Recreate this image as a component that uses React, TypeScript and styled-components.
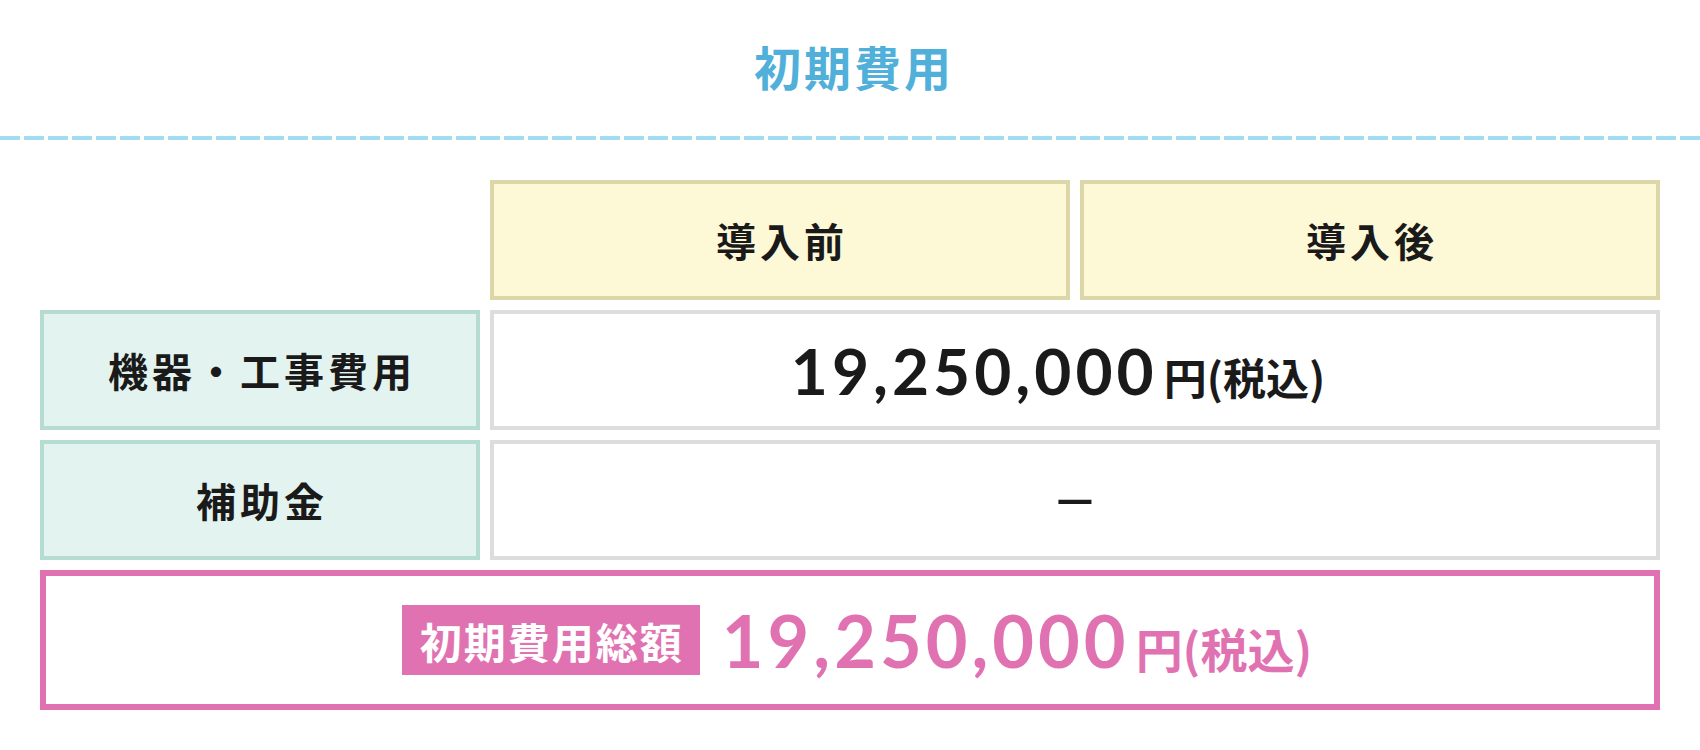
import React from "react";
import styled, { createGlobalStyle } from "styled-components";

const GlobalStyle = createGlobalStyle`
  body {
    margin: 0;
    background: #ffffff;
    font-family: "Noto Sans CJK JP", "Noto Sans", sans-serif;
    color: #1a1a1a;
  }
`;

const Page = styled.div`
  width: 1700px;
  height: 750px;
  background: #ffffff;
`;

// 見出し
const Heading = styled.h2`
  margin: 0;
  box-sizing: border-box;
  height: 136px;
  padding: 0 0 6px 8px;
  display: flex;
  align-items: center;
  justify-content: center;
  font-size: 47px;
  font-weight: 700;
  letter-spacing: 3px;
  color: #50b0da;
`;

// 点線の区切り
const Divider = styled.div`
  height: 4px;
  background: repeating-linear-gradient(
    to right,
    #a3dcf2 0 20px,
    transparent 20px 24px
  );
`;

const Table = styled.div`
  display: grid;
  grid-template-columns: 440px 1fr 1fr;
  grid-auto-rows: 120px;
  gap: 10px;
  padding: 40px 40px 0;
`;

const Cell = styled.div<{ $span?: number }>`
  box-sizing: border-box;
  display: flex;
  align-items: center;
  justify-content: center;
  grid-column: span ${(p) => p.$span ?? 1};
  font-size: 40px;
  font-weight: 700;
  letter-spacing: 0.1em;
  text-indent: 0.1em;
`;

const HeadCell = styled(Cell)`
  background: #fdf8d6;
  border: 4px solid #ddd6a9;
`;

const LabelCell = styled(Cell)`
  background: #e3f3ef;
  border: 4px solid #b6dcd1;
`;

const ValueCell = styled(Cell)`
  background: #ffffff;
  border: 4px solid #dddddd;
`;

const TotalBox = styled.div`
  grid-column: span 3;
  height: 140px;
  box-sizing: border-box;
  border: 6px solid #e172b2;
  padding-left: 14px;
  display: flex;
  align-items: center;
  justify-content: center;
`;

const Badge = styled.span`
  background: #e172b2;
  color: #ffffff;
  font-size: 42px;
  font-weight: 700;
  letter-spacing: 2px;
  padding: 0 16px 0 18px;
  height: 70px;
  display: flex;
  align-items: center;
  margin-right: 22px;
`;

const Price = styled.span<{ $color?: string; $size: number; $unit: number; $shift: number }>`
  display: flex;
  align-items: baseline;
  color: ${(p) => p.$color ?? "#1a1a1a"};
  font-size: ${(p) => p.$size}px;
  letter-spacing: 0;
  text-indent: 0;
  padding-right: ${(p) => p.$shift}px;

  b {
    font-family: "Lato", "Noto Sans", sans-serif;
    font-weight: 700;
    letter-spacing: ${(p) => Math.round(p.$size / 18)}px;
    margin-right: 6px;
  }

  small {
    font-size: ${(p) => p.$unit}px;
    font-weight: 700;
  }
`;

const Dash = styled.span`
  display: inline-block;
  font-family: "Lato", sans-serif;
  font-size: 48px;
  font-weight: 700;
  transform: scaleX(1.7);
  padding-bottom: 6px;
`;

export default function App() {
  return (
    <Page>
      <GlobalStyle />
      <Heading>初期費用</Heading>
      <Divider />
      <Table>
        <div />
        <HeadCell>導入前</HeadCell>
        <HeadCell>導入後</HeadCell>

        <LabelCell>機器・工事費用</LabelCell>
        <ValueCell $span={2}>
          <Price $size={64} $unit={43} $shift={34}>
            <b>19,250,000</b>
            <small>円(税込)</small>
          </Price>
        </ValueCell>

        <LabelCell>補助金</LabelCell>
        <ValueCell $span={2}>
          <Dash>–</Dash>
        </ValueCell>

        <TotalBox>
          <Badge>初期費用総額</Badge>
          <Price $color="#e172b2" $size={72} $unit={47} $shift={0}>
            <b>19,250,000</b>
            <small>円(税込)</small>
          </Price>
        </TotalBox>
      </Table>
    </Page>
  );
}
